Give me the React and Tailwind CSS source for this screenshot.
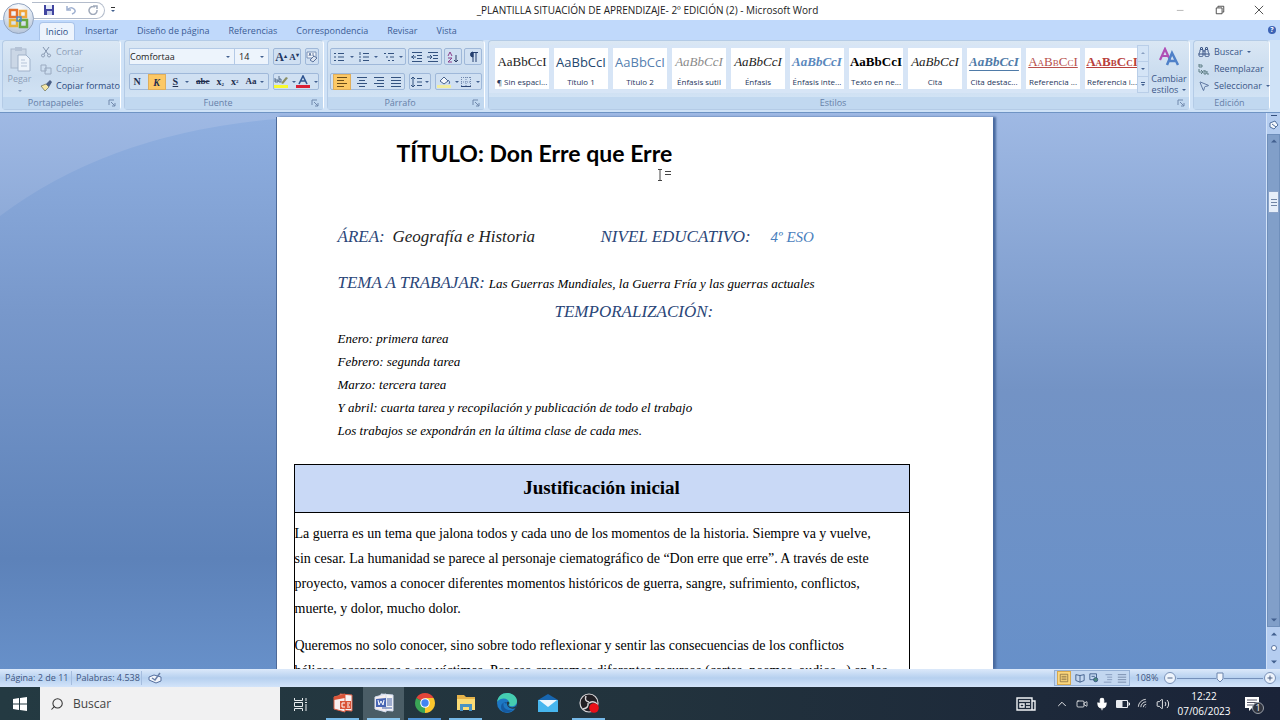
import {
  ChevronUp,
  Video,
  Mic,
  Wifi,
  Volume2,
  Search,
  Binoculars,
  MousePointer2,
} from 'lucide-react';

const tabs = ['Insertar', 'Diseño de página', 'Referencias', 'Correspondencia', 'Revisar', 'Vista'];

const styles = [
  { name: '¶ Sin espaci...', look: 'text-[#222] text-[13px]' },
  { name: 'Título 1', look: 'font-[Open_Sans] text-[#24476f] text-[13px] font-medium' },
  { name: 'Título 2', look: 'font-[Open_Sans] text-[#5580b0] text-[13px] font-medium' },
  { name: 'Énfasis sutil', look: 'italic text-[#8a8a8a] text-[13px]' },
  { name: 'Énfasis', look: 'italic text-[#222] text-[13px]' },
  { name: 'Énfasis inte...', look: 'italic font-bold text-[#5a88bd] text-[13px]' },
  { name: 'Texto en ne...', look: 'font-bold text-black text-[13px]' },
  { name: 'Cita', look: 'italic text-[#222] text-[13px]' },
  { name: 'Cita destac...', look: 'italic font-bold text-[#4f7ba8] text-[13px] underline underline-offset-4' },
  { name: 'Referencia ...', look: 'text-[#b8504c] text-[13px] underline [font-variant:small-caps]' },
  { name: 'Referencia i...', look: 'font-bold text-[#b8403c] text-[13px] underline [font-variant:small-caps]' },
];

const schedule = [
  'Enero: primera tarea',
  'Febrero: segunda tarea',
  'Marzo: tercera tarea',
  'Y abril: cuarta tarea y recopilación y publicación de todo el trabajo',
  'Los trabajos se expondrán en la última clase de cada mes.',
];

const firstParagraph = [
  'La guerra es un tema que jalona todos y cada uno de los momentos de la historia. Siempre va y vuelve,',
  'sin cesar. La humanidad se parece al personaje ciematográfico de “Don erre que erre”. A través de este',
  'proyecto, vamos a conocer diferentes momentos históricos de guerra, sangre, sufrimiento, conflictos,',
  'muerte, y dolor, mucho dolor.',
];

const secondParagraph = [
  'Queremos no solo conocer, sino sobre todo reflexionar y sentir las consecuencias de los conflictos',
  'bélicos, acercarnos a sus víctimas. Por eso crearemos diferentes recursos (cartas, poemas, audios...) en los',
];

function Caret({ className = '' }) {
  return (
    <svg className={`w-1 h-1 shrink-0 ${className}`} viewBox="0 0 4 4">
      <path d="M0 1h4L2 3z" fill="#42608f" />
    </svg>
  );
}

function Launcher() {
  return (
    <svg className="w-2 h-2" viewBox="0 0 8 8" fill="none" stroke="#7189ad">
      <path d="M1 6V1h5M3 3l4 4M7 4v3H4" />
    </svg>
  );
}

function Group({ label, launcher, className = '', children }) {
  return (
    <section className={`flex flex-col rounded-sm border border-[#b4cbe6] border-r-white bg-linear-to-b from-[#dae7f4] via-[#cadcef] to-[#d5e6f7] ${className}`}>
      <div className="flex-1 min-h-0">{children}</div>
      <div className="flex items-center h-3 bg-[#c1d8f0] text-[#6680a8] text-[9px] leading-3 pr-1">
        <span className="flex-1 text-center">{label}</span>
        {launcher && <button aria-label={`Opciones de ${label}`}><Launcher /></button>}
      </div>
    </section>
  );
}

function Bar({ className = '', children }) {
  return (
    <div className={`flex items-center justify-around h-[17px] rounded-xs border border-[#9fb8d9] bg-[#d0e0f2] ${className}`}>
      {children}
    </div>
  );
}

function Lines({ d, color = '#33527f', size = 'w-3 h-3', className = '', children }) {
  return (
    <svg className={`${size} ${className}`} viewBox="0 0 12 12" fill="none" stroke={color}>
      <path d={d} />
      {children}
    </svg>
  );
}

function Clipboard() {
  return (
    <Group label="Portapapeles" launcher className="w-[119px]">
      <div className="flex h-full text-[#8e9fb8]">
        <button className="flex flex-col items-center w-9 pt-1">
          <svg className="w-6 h-7" viewBox="0 0 24 28">
            <rect x="3" y="4" width="15" height="19" fill="#cbd7e6" stroke="#a9b8cc" />
            <path d="M7 2h7v4H7z" fill="#b5c3d6" />
            <path d="M10 10h8l4 4v12H10z" fill="#eef4fb" stroke="#9fb1c9" />
            <path d="M13 15h4M13 18h6M13 21h6" stroke="#b7c5d9" />
          </svg>
          <span className="leading-3">Pegar</span>
          <Caret className="mt-1 opacity-50" />
        </button>
        <div className="flex flex-col pt-0.5 pl-1">
          <button className="flex items-center gap-1 h-[17px]">
            <Lines d="M3 1l5 7M9 1L4 8M3 8a1.5 1.5 0 1 0 .1 0M9 8a1.5 1.5 0 1 0 .1 0" color="#8394ad" />
            Cortar
          </button>
          <button className="flex items-center gap-1 h-[17px]">
            <Lines d="M1 2h5v6H1zM5 5h6v6H5z" color="#9aaac0" />
            Copiar
          </button>
          <button className="flex items-center gap-1 h-[17px] text-[#2c4b80]">
            <svg className="w-3 h-3" viewBox="0 0 12 12">
              <path d="M1 6l4 5 4-4-3-3z" fill="#f5e7a6" stroke="#6b6f52" strokeWidth=".7" />
              <path d="M6 4l4-4 2 2-3 5z" fill="#4a5f86" />
            </svg>
            Copiar formato
          </button>
        </div>
      </div>
    </Group>
  );
}

function FontGroup() {
  return (
    <Group label="Fuente" launcher className="w-[200px]">
      <div className="flex flex-col gap-2 pt-[7px] px-1">
        <div className="flex gap-1">
          <div className="flex h-[17px] bg-[#edf4fc] border border-[#b4cae6] text-[#222]">
            <div className="flex items-center w-[104px] pr-1">
              <input aria-label="Fuente" defaultValue="Comfortaa" className="w-full min-w-0 outline-none" />
              <Caret />
            </div>
            <div className="flex items-center w-[34px] pl-1 pr-1 border-l border-[#b4cae6]">
              <input aria-label="Tamaño" defaultValue="14" className="w-full min-w-0 outline-none" />
              <Caret />
            </div>
          </div>
          <Bar className="w-8 font-[Liberation_Serif] font-bold text-[#1f3763]">
            <button className="text-[12px] leading-3">A<sup className="text-[6px]">▴</sup></button>
            <button className="text-[9px] leading-3">A<sup className="text-[6px]">▾</sup></button>
          </Bar>
          <Bar className="w-4">
            <button aria-label="Borrar formato">
              <svg className="w-3 h-3" viewBox="0 0 12 12">
                <path d="M1 1h9v6H1z" fill="#f2f6fb" stroke="#7890b5" />
                <path d="M3 5l1-3 1 3M7 2v3h1" fill="none" stroke="#45618f" strokeWidth=".8" />
                <path d="M4 9l4-4 3 2-4 4z" fill="#dbe3f0" stroke="#5c739c" />
              </svg>
            </button>
          </Bar>
        </div>
        <div className="flex gap-1">
          <Bar className="w-[141px] font-[Liberation_Serif] font-bold text-[#1f2f50] text-[10px]">
            <button>N</button>
            <button className="w-[18px] h-4 bg-[#fcc865] border border-[#dfae5c] italic">K</button>
            <button className="underline">S</button>
            <Caret />
            <button className="line-through text-[9px]">abc</button>
            <button>x<sub className="text-[5px]">2</sub></button>
            <button>x<sup className="text-[5px]">2</sup></button>
            <button className="flex items-center gap-1 text-[9px]">Aa<Caret /></button>
          </Bar>
          <Bar className="flex-1">
            <button aria-label="Resaltado" className="flex items-center gap-1">
              <svg className="w-[14px] h-3.5" viewBox="0 0 14 14">
                <path d="M1 3v4h3V5H1M5 1v6h2V4H5" fill="none" stroke="#49627f" strokeWidth=".9" />
                <path d="M7 8l5-6 2 1-5 6z" fill="#8b8f65" />
                <path d="M0 10h14v3H0z" fill="#f8fa2e" />
              </svg>
              <Caret />
            </button>
            <button aria-label="Color de fuente" className="flex items-center gap-1">
              <svg className="w-[14px] h-3.5" viewBox="0 0 14 14">
                <path d="M3 9l4-8 4 8M5 6h4" fill="none" stroke="#2f5490" strokeWidth="1.6" />
                <path d="M0 10h14v3H0z" fill="#da1f35" />
              </svg>
              <Caret />
            </button>
          </Bar>
        </div>
      </div>
    </Group>
  );
}

function Paragraph() {
  return (
    <Group label="Párrafo" launcher className="w-[158px]">
      <div className="flex flex-col gap-2 pt-[7px] px-0.5">
        <div className="flex gap-0.5">
          <Bar className="w-[77px]">
            <button aria-label="Viñetas"><Lines d="M1 2.5h2M1 6h2M1 9.5h2M5 2.5h6M5 6h6M5 9.5h6" /></button>
            <Caret />
            <button aria-label="Numeración"><Lines d="M2 1v3M1 6h2M2 8v3M5 2.5h6M5 6h6M5 9.5h6" /></button>
            <Caret />
            <button aria-label="Lista multinivel"><Lines d="M1 2.5h2M3 6h2M5 9.5h2M5 2.5h6M7 6h4M9 9.5h2" /></button>
            <Caret />
          </Bar>
          <Bar className="w-[34px]">
            <button aria-label="Reducir sangría"><Lines d="M1 1.5h10M6 4.5h5M6 7.5h5M1 10.5h10M5 6H0M3 4L1 6l2 2" /></button>
            <button aria-label="Aumentar sangría"><Lines d="M1 1.5h10M6 4.5h5M6 7.5h5M1 10.5h10M0 6h5M3 4l2 2-2 2" /></button>
          </Bar>
          <Bar className="w-[18px]">
            <button aria-label="Ordenar">
              <Lines d="M1 5l2-4 2 4M1 7h4l-4 4h4" color="#8c3f8a"><path d="M9 4v7M7 9l2 2 2-2" stroke="#2d3f66" /></Lines>
            </button>
          </Bar>
          <Bar className="w-[18px]">
            <button aria-label="Mostrar todo">
              <Lines d="M6 1v10M9 1v10M5 1.500h6" color="#243f6e"><path d="M6 1a2.500 2.500 0 0 0 0 5z" fill="#243f6e" /></Lines>
            </button>
          </Bar>
        </div>
        <div className="flex gap-1">
          <Bar className="w-[75px]">
            <button aria-label="Alinear a la izquierda" className="w-[18px] h-4 flex items-center justify-center bg-[#fcc865] border border-[#dfae5c]">
              <Lines d="M1 1.5h10M1 4.5h7M1 7.5h10M1 10.5h7" color="#6b4c18" />
            </button>
            <button aria-label="Centrar"><Lines d="M1 1.5h10M3 4.5h6M1 7.5h10M3 10.5h6" /></button>
            <button aria-label="Alinear a la derecha"><Lines d="M1 1.5h10M4 4.5h7M1 7.5h10M4 10.5h7" /></button>
            <button aria-label="Justificar"><Lines d="M1 1.5h10M1 4.5h10M1 7.5h10M1 10.5h10" /></button>
          </Bar>
          <Bar className="w-[22px]">
            <button aria-label="Interlineado" className="flex items-center gap-0.5">
              <Lines d="M2 1v10M0 3l2-2 2 2M0 9l2 2 2-2M6 2.5h5M6 6h5M6 9.5h5" /><Caret />
            </button>
          </Bar>
          <Bar className="flex-1">
            <button aria-label="Sombreado" className="flex items-center gap-1">
              <svg className="w-3.5 h-3.5" viewBox="0 0 14 14">
                <path d="M3 6l4-4 4 4-4 3z" fill="#f3f7fc" stroke="#4b658f" />
                <path d="M11 5q3 2 1 4" fill="none" stroke="#49699c" />
                <path d="M0 10h14v3H0z" fill="#f1eda0" />
              </svg>
              <Caret />
            </button>
            <button aria-label="Bordes" className="flex items-center gap-1">
              <svg className="w-3 h-3" viewBox="0 0 12 12" fill="none" stroke="#7088ae">
                <path d="M1.500 1v9M6 1v9M10.500 1v9M1 1.500h10M1 6h10" strokeDasharray="1 1" />
                <path d="M1 10.500h10" stroke="#2f4876" />
              </svg>
              <Caret />
            </button>
          </Bar>
        </div>
      </div>
    </Group>
  );
}

function Styles() {
  return (
    <Group label="Estilos" launcher className="flex-1 min-w-0">
      <div className="flex h-full">
        <div className="flex flex-1 min-w-0 items-start gap-[5px] mt-1 h-12 px-1.5 py-[3px] bg-[#d7e5f6]">
          {styles.map((s) => (
            <button key={s.name} className="flex flex-col items-center justify-between shrink-0 w-[54px] h-[41px] pt-1.5 bg-white text-[#25365c]">
              <span className={`font-[Liberation_Serif] leading-4 whitespace-nowrap ${s.look}`}>AaBbCcI</span>
              <span className="text-[8px] leading-[14px] whitespace-nowrap">{s.name}</span>
            </button>
          ))}
        </div>
        <div className="flex flex-col w-3 h-12 mt-1 shrink-0 border border-[#b9cee8] divide-y divide-[#b9cee8] bg-[#d4e4f6]">
          <button aria-label="Fila anterior" className="flex-1 flex items-center justify-center"><Caret className="rotate-180 opacity-50" /></button>
          <button aria-label="Fila siguiente" className="flex-1 flex items-center justify-center"><Caret /></button>
          <button aria-label="Más" className="flex-1 flex flex-col items-center justify-center"><span className="w-1 h-px bg-[#42608f]" /><Caret /></button>
        </div>
        <button className="flex flex-col items-center w-10 shrink-0 pt-1.5 text-[#3c5788] leading-[11px]">
          <svg className="w-5 h-5 mb-1.5" viewBox="0 0 20 20" fill="none">
            <path d="M1 13L6 2l5 11M3 9h6" stroke="#b04fb5" strokeWidth="2.200" />
            <path d="M8 18l5-12 6 12M10 14h6" stroke="#4f80c8" strokeWidth="2.500" />
          </svg>
          <span>Cambiar</span>
          <span className="flex items-center gap-1">estilos <Caret /></span>
        </button>
      </div>
    </Group>
  );
}

function Editing() {
  return (
    <Group label="Edición" className="w-[77px]">
      <div className="flex flex-col pt-0.5 pl-1 text-[#3c5788]">
        <button className="flex items-center gap-1 h-[17px]"><Binoculars className="w-3 h-3" />Buscar <Caret /></button>
        <button className="flex items-center gap-1 h-[17px]">
          <Lines d="M1 1v3h3V2H1M6 7v4h2V8H6M9 8v3h2M1 6v3h3M3 7l2 2-2 2" color="#5f7f86" />
          Reemplazar
        </button>
        <button className="flex items-center gap-1 h-[17px]"><MousePointer2 className="w-3 h-3 shrink-0" strokeWidth={1.5} />Seleccionar <Caret /></button>
      </div>
    </Group>
  );
}

function Header() {
  return (
    <header className="relative shrink-0">
      <div className="flex items-center h-5 bg-white">
        <div className="flex items-center gap-3 h-[17px] ml-8 pl-3 w-[73px] rounded-r-full border border-l-0 border-[#b3bccb]">
          <button aria-label="Guardar">
            <svg className="w-[10px] h-[10px]" viewBox="0 0 10 10">
              <path d="M0 0h10v10H0z" fill="#4145a0" />
              <path d="M2 0h6v4H2z" fill="#e5ebf8" />
              <path d="M3 6h5v4H3z" fill="#c4cce8" />
            </svg>
          </button>
          <button aria-label="Deshacer">
            <svg className="w-[10px] h-[10px]" viewBox="0 0 10 10" fill="none" stroke="#9fb0d0" strokeWidth="1.500">
              <path d="M1 1v4h4M1 5q4-4 7-1t-2 5" />
            </svg>
          </button>
          <button aria-label="Rehacer">
            <svg className="w-[10px] h-[10px]" viewBox="0 0 10 10" fill="none" stroke="#9fa9ba" strokeWidth="1.500">
              <path d="M7 2a4 4 0 1 0 2 3M5 1h4v3" />
            </svg>
          </button>
        </div>
        <button aria-label="Personalizar" className="flex flex-col items-center ml-0.5 gap-px w-3"><span className="w-1 h-px bg-[#333]" /><Caret /></button>
        <h1 className="flex-1 text-center text-[10px] leading-5 text-[#222]">_PLANTILLA SITUACIÓN DE APRENDIZAJE- 2º EDICIÓN (2) - Microsoft Word</h1>
        <div className="flex items-center gap-[29px] pr-4 text-[#333]">
          <button aria-label="Minimizar"><Lines d="M1 6.500h8" color="#aaa" size="w-2.5 h-2.5" /></button>
          <button aria-label="Restaurar"><Lines d="M1.500 3.500h7v7h-7zM3.500 3V1.500h7v7H9" color="#333" size="w-2.5 h-2.5" /></button>
          <button aria-label="Cerrar"><Lines d="M1 1l10 10M11 1L1 11" color="#333" size="w-2.5 h-2.5" /></button>
        </div>
      </div>
      <nav className="flex items-end h-5 pl-[39px] pr-1 bg-[#c0d9fb] text-[#3b5c95]">
        <button className="w-9 h-[18px] rounded-t-sm border border-b-0 border-[#a9c4ea] bg-[#edf4fd] text-[#2c4d85]">Inicio</button>
        <div className="flex flex-1 items-center gap-[19px] h-[18px] pl-2.5">
          {tabs.map((t) => <button key={t}>{t}</button>)}
        </div>
        <button aria-label="Ayuda" className="flex items-center justify-center mb-1.5 w-2 h-2 rounded-full bg-[#3b62b5] text-white text-[7px] font-bold">?</button>
      </nav>
      <button aria-label="Botón de Office" className="absolute left-[3px] top-[3px]">
        <svg className="w-[31px] h-[31px]" viewBox="0 0 31 31">
          <defs>
            <radialGradient id="orb" cx=".5" cy=".2" r=".9">
              <stop offset="0" stopColor="#fff" />
              <stop offset=".5" stopColor="#dce4ef" />
              <stop offset="1" stopColor="#a9bad3" />
            </radialGradient>
          </defs>
          <circle cx="15.500" cy="15.500" r="15" fill="url(#orb)" stroke="#93a5c0" />
          <g fill="none" strokeWidth="2.500">
            <path d="M7 7h7v7H7z" stroke="#e4702d" />
            <path d="M17 8h6v6h-6z" stroke="#f0a63c" />
            <path d="M7 17h7v6H7z" stroke="#e8b23a" />
            <path d="M17 17h7v7h-7z" stroke="#67a844" />
            <path d="M14 14h4v4h-4z" stroke="#4a86cb" strokeWidth="1.500" />
          </g>
        </svg>
      </button>
    </header>
  );
}

function Page() {
  return (
    <article className="w-[717px] min-h-full shrink-0 bg-white border-l border-[#4d6a99] shadow-[3px_0_2px_#4a6ba0] font-[Liberation_Serif] text-black whitespace-nowrap">
      <div className="pl-[61px] italic text-[13px] leading-[23px]">
        <h2 className="pl-[59px] pt-5 font-[Lato] not-italic font-bold text-[23px] leading-8">TÍTULO: Don Erre que Erre</h2>
        <div className="flex items-start pl-[318px] h-14">
          <svg className="w-4 h-3" viewBox="0 0 16 12" fill="none" stroke="#444">
            <path d="M2 .5h4M2 11.500h4M4 1v10M9 2.500h6M9 5.500h6" />
          </svg>
        </div>
        <div className="flex items-baseline text-[17px] text-[#2a4678]">
          <span className="w-[55px]">ÁREA:</span>
          <span className="w-52 text-[#222]">Geografía e Historia</span>
          <span className="w-[170px]">NIVEL EDUCATIVO:</span>
          <span className="text-[15px] text-[#4a80bd]">4º ESO</span>
        </div>
        <p className="flex items-baseline gap-1 mt-[22px]">
          <span className="text-[17px] text-[#2a4678]">TEMA A TRABAJAR:</span>
          Las Guerras Mundiales, la Guerra Fría y las guerras actuales
        </p>
        <p className="pl-[217px] mt-[5px] mb-1 text-[17px] text-[#2a4678]">TEMPORALIZACIÓN:</p>
        {schedule.map((line) => <p key={line}>{line}</p>)}
      </div>
      <table className="mt-[22px] ml-[17px] w-[616px] border-collapse text-left">
        <thead>
          <tr>
            <th className="h-12 p-0 border border-black bg-[#c9d9f6] text-center text-[19px] font-bold">Justificación inicial</th>
          </tr>
        </thead>
        <tbody>
          <tr>
            <td className="p-0 pt-2 border border-black text-[14px] leading-[25px]">
              {firstParagraph.map((line) => <p key={line}>{line}</p>)}
              <div className="mt-3">
                {secondParagraph.map((line) => <p key={line}>{line}</p>)}
              </div>
            </td>
          </tr>
        </tbody>
      </table>
    </article>
  );
}

function Scrollbar() {
  return (
    <aside className="flex flex-col items-center w-3.5 shrink-0 bg-[#b5cdf0] border-l border-[#d2e2f8]">
      <span className="w-1.5 h-px mt-0.5 bg-[#35507d]" />
      <svg className="w-2.5 h-2.5 my-1" viewBox="0 0 10 10" fill="#f3f7fc" stroke="#53709e">
        <path d="M1 3l5-2 3 4-4 4-4-2z" />
        <path d="M3 4l4 3" />
      </svg>
      <div className="flex flex-1 flex-col items-center w-full bg-[#819fc9] border border-[#6f8fbb]">
        <Caret className="my-1 scale-150 rotate-180" />
        <div className="flex flex-col items-center justify-center gap-0.5 mt-11 w-full h-[22px] bg-[#e6eef9] border border-[#8ba3c8]">
          <span className="w-1.5 h-px bg-[#7185a5]" />
          <span className="w-1.5 h-px bg-[#7185a5]" />
          <span className="w-1.5 h-px bg-[#7185a5]" />
        </div>
        <Caret className="mt-auto mb-1 scale-150" />
      </div>
      <div className="flex flex-col items-center justify-around h-[42px]">
        <Caret className="scale-150 rotate-180" />
        <span className="w-1.5 h-1.5 rounded-full border border-[#5a75a3] bg-white" />
        <Caret className="scale-150" />
      </div>
    </aside>
  );
}

function StatusBar() {
  return (
    <footer className="flex items-center h-[18px] shrink-0 bg-linear-to-b from-[#dce9fa] via-[#b6d0ef] to-[#d3e4fa] text-[#3d557f] text-[9px]">
      <span className="w-[72px] pl-[5px] border-r border-[#a5bddf]">Página: 2 de 11</span>
      <span className="w-[70px] pl-1 border-r border-[#a5bddf]">Palabras: 4.538</span>
      <svg className="w-3.5 h-3 ml-1.5" viewBox="0 0 14 12">
        <path d="M1 5l5-2 7 2v4l-5 2-7-3z" fill="#f2f5fb" stroke="#56709f" />
        <path d="M4 6l3 2 5-7" fill="none" stroke="#6a80a8" strokeWidth="1.500" />
      </svg>
      <div className="flex items-center justify-around ml-auto w-[76px] h-4 border border-[#95b0d5] bg-[#c3d7f0]">
        <button aria-label="Diseño de impresión" className="flex items-center justify-center w-3.5 h-3.5 bg-[#fbd77d] border border-[#d7a94f]">
          <Lines d="M1.500 1.500h9v9h-9zM3 4h6M3 6h6M3 8h6" color="#8a7245" size="w-2.5 h-2.5" />
        </button>
        <button aria-label="Lectura"><Lines d="M6 3v8M1 2l5 1 5-1v7l-5 2-5-2z" size="w-2.5 h-2.5" /></button>
        <button aria-label="Diseño web"><Lines d="M1 1h8v7H1zM3 4h4" size="w-2.5 h-2.5"><circle cx="8" cy="8" r="2.500" fill="#4c8b7b" /></Lines></button>
        <button aria-label="Esquema"><Lines d="M3 2h8M5 5h6M5 8h6M1 11h9" color="#7d92b5" size="w-2.5 h-2.5" /></button>
        <button aria-label="Borrador"><Lines d="M1 2h10M1 5h10M1 8h10M1 11h10" color="#6b7f9f" size="w-2.5 h-2.5" /></button>
      </div>
      <span className="w-[34px] text-center">108%</span>
      <button aria-label="Alejar" className="shrink-0">
        <Lines d="M3 6h6" color="#33486f" className="rounded-full bg-[#eef4fc] border border-[#7a92b8]" />
      </button>
      <div className="flex items-center justify-center w-[86px] mx-px">
        <span className="flex-1 h-px bg-[#7590ba]" />
        <svg className="w-2 h-3" viewBox="0 0 8 12"><path d="M1 1h6v6L4 10 1 7z" fill="#f2f6fc" stroke="#6a83ac" /></svg>
        <span className="flex-1 h-px bg-[#7590ba]" />
      </div>
      <button aria-label="Acercar" className="mr-1 shrink-0">
        <Lines d="M3 6h6M6 3v6" color="#33486f" className="rounded-full bg-[#eef4fc] border border-[#7a92b8]" />
      </button>
    </footer>
  );
}

function OfficeIcon({ color, children }) {
  return (
    <svg className="w-5 h-5" viewBox="0 0 20 20">
      <path d="M7 1l12 1v16L7 17z" fill="#f6f4f5" stroke={color} />
      <path d="M1 4l11-3v18L1 16z" fill="#f7eeee" stroke={color} />
      {children}
    </svg>
  );
}

const apps = [
  {
    name: 'PowerPoint',
    frame: 'border-[#76b9e8]',
    icon: (
      <OfficeIcon color="#dc6047">
        <path d="M1 4l11-3v4L1 7zM7 8h11v8H7z" fill="#d95438" />
        <path d="M12 10H9v4h3M14 10h3M14 12h2M14 14h3" stroke="#fff" fill="none" />
      </OfficeIcon>
    ),
  },
  {
    name: 'Word',
    frame: 'border-[#8ac6ee] bg-[#4a5d66]',
    icon: (
      <OfficeIcon color="#d5def0">
        <path d="M2 6l10-1v9L2 14z" fill="#4865b4" />
        <path d="M4 7l1 5 2-4 2 4 1-5" stroke="#fff" fill="none" />
        <path d="M13 6h5M13 8h5M13 10h5M8 15h10M13 12h5" stroke="#4562a8" />
      </OfficeIcon>
    ),
  },
  {
    name: 'Chrome',
    frame: 'border-[#4f93d6]',
    icon: (
      <svg className="w-5 h-5" viewBox="0 0 20 20">
        <path d="M10 10L1.340 5A10 10 0 0 1 18.660 5z" fill="#e2453a" />
        <path d="M10 10L18.660 5A10 10 0 0 1 10 20z" fill="#fbc62d" />
        <path d="M10 10V20A10 10 0 0 1 1.340 5z" fill="#3aa556" />
        <path d="M10 5h8.660L14 12z" fill="#fbc62d" />
        <circle cx="10" cy="10" r="4.800" fill="#fff" />
        <circle cx="10" cy="10" r="3.700" fill="#4384f0" />
      </svg>
    ),
  },
  {
    name: 'Explorador de archivos',
    frame: 'border-[#76b9e8]',
    icon: (
      <svg className="w-5 h-5" viewBox="0 0 20 20">
        <path d="M1 2h7l2 2h9v13H1z" fill="#e6b34a" />
        <path d="M1 6h18v11H1z" fill="#fbdc76" />
        <path d="M4 11h12v7h-3v-4H7v4H4z" fill="#4a93c4" />
      </svg>
    ),
  },
  {
    name: 'Edge',
    frame: 'border-transparent',
    icon: (
      <svg className="w-5 h-5" viewBox="0 0 20 20">
        <circle cx="10" cy="10" r="10" fill="#1d78c4" />
        <path d="M0 9C1 3 5 0 10 0c6 0 10 4 10 8 0 4-3 6-7 5-2-1 0-2-1-4C11 5 4 4 0 9z" fill="#45cdb0" />
        <path d="M7 9c-2 4 1 9 9 8-5 4-12 3-12-3 0-3 2-5 6-5l-1 2z" fill="#155aa0" />
        <path d="M10 9c2-1 3 1 2 2s-1 2 1 3c3 1 5 0 7-2l-1 3c-5 2-10-1-9-6z" fill="#243a45" />
      </svg>
    ),
  },
  {
    name: 'Correo',
    frame: 'border-transparent',
    icon: (
      <svg className="w-5 h-5" viewBox="0 0 20 20">
        <path d="M0 7l10-6 10 6v3H0z" fill="#1766b0" />
        <path d="M0 7h20v12H0z" fill="#47b6ee" />
        <path d="M1 7h18l-9 7z" fill="#eef7fd" />
      </svg>
    ),
  },
  {
    name: 'OBS Studio',
    frame: 'border-[#76b9e8]',
    icon: (
      <svg className="w-5 h-5" viewBox="0 0 20 20">
        <circle cx="10" cy="10" r="9" fill="#221f24" stroke="#d8d5d8" strokeWidth="1.200" />
        <path d="M10 9Q5 8 7 3M10 10q5-3 8 1M9 10q1 5-5 6" fill="none" stroke="#d8d5d8" strokeWidth="1.500" />
        <circle cx="15" cy="15" r="4.800" fill="#e81018" />
      </svg>
    ),
  },
];

function Taskbar() {
  return (
    <div className="flex h-[33px] shrink-0 bg-linear-to-r from-[#243a42] via-[#22333d] to-[#1a2338] text-white">
      <button aria-label="Inicio" className="flex items-center justify-center w-10">
        <svg className="w-3.5 h-3.5" viewBox="0 0 14 14" fill="#fff">
          <path d="M0 2l6-1v5.500H0zM7 1l7-1v6.500H7zM0 7.500h6V13l-6-1zM7 7.500h7V14l-7-1z" />
        </svg>
      </button>
      <label className="flex items-center gap-[9px] w-60 pl-2.5 bg-[#f1f1f2] text-[#333] text-[12px]">
        <Search className="w-3.5 h-3.5 -scale-x-100" strokeWidth={1.8} />
        <input aria-label="Buscar" placeholder="Buscar" className="w-32 outline-none placeholder:text-[#444]" />
      </label>
      <button aria-label="Vista de tareas" className="flex items-center justify-center w-[42px]">
        <svg className="w-3.5 h-3.5" viewBox="0 0 14 14" fill="none" stroke="#e8ecee">
          <path d="M.5 1v2.500h8V1M.5 5.500h8v4h-8zM.5 14v-2.500h8V14M12 1v3M12 7v7M11 5.500h2" />
        </svg>
      </button>
      <div className="flex">
        {apps.map((app) => (
          <div key={app.name} className={`w-[41px] flex ${app.name === 'Word' ? 'bg-[#4a5d66]' : ''}`}>
            <button aria-label={app.name} className={`flex flex-1 items-center justify-center mx-1 border-b-2 ${app.frame}`}>{app.icon}</button>
          </div>
        ))}
      </div>
      <div className="flex flex-1 items-center justify-end gap-[7px]">
        <svg className="w-5 h-3.5 mr-3" viewBox="0 0 20 14" fill="none" stroke="#f0f2f5" strokeWidth="1.400">
          <path d="M1 1h15v12H1zM16 4h3v9h-3M3 4h11M4 7h4v3H4zM10 7h4M10 10h4" />
        </svg>
        <ChevronUp className="w-3.5 h-3.5" strokeWidth={1.5} />
        <Video className="w-3 h-3" strokeWidth={1.5} />
        <Mic className="w-3.5 h-3.5" fill="#fff" strokeWidth={1.8} />
        <svg className="w-3.5 h-2" viewBox="0 0 14 8" fill="none" stroke="#e8ebf0"><path d="M.5.5h11v7H.5zM12 3h1.500v2H12" /><path d="M1 1h5v6H1z" fill="#e8ebf0" /></svg>
        <Wifi className="w-3 h-3 -rotate-45" strokeWidth={1.5} />
        <Volume2 className="w-3.5 h-3.5" strokeWidth={1.5} />
        <div className="w-[54px] text-center text-[10px] leading-[15px] whitespace-nowrap">
          <p>12:22</p>
          <p>07/06/2023</p>
        </div>
        <button aria-label="Notificaciones" className="relative ml-1.5 mr-5">
          <svg className="w-4 h-4" viewBox="0 0 16 16"><path d="M1 1h14v11H8l-3 3v-3H1z" fill="#fff" /><path d="M3 4h10M3 6.500h10M3 9h6" stroke="#556" /></svg>
          <span className="absolute left-2 top-1.5 flex items-center justify-center w-3 h-3 rounded-full border border-[#9aa0aa] bg-[#30343f] text-[9px]">1</span>
        </button>
      </div>
    </div>
  );
}

export default function App() {
  return (
    <div className="flex flex-col h-screen overflow-hidden font-[Open_Sans,sans-serif] text-[9px] whitespace-nowrap">
      <Header />
      <div className="flex gap-[3px] h-[73px] shrink-0 px-0.5 pr-2.5 pb-0.5 bg-[#cfe2f7] border-b border-[#6f94c4]">
        <Clipboard />
        <FontGroup />
        <Paragraph />
        <Styles />
        <Editing />
      </div>
      <main className="flex flex-1 min-h-0">
        <div className="relative flex flex-1 justify-center min-w-0 pt-1 pl-0.5 overflow-hidden bg-linear-to-b from-[#9fb9e4] via-[#7393c5] to-[#6790c9]">
          <svg className="absolute left-0 top-0 w-[276px] h-full" viewBox="0 0 276 556" preserveAspectRatio="none">
            <defs>
              <linearGradient id="swoosh" x1="0" y1="0" x2="0" y2="1">
                <stop offset="0" stopColor="#8fafe0" />
                <stop offset=".35" stopColor="#7898cb" />
                <stop offset=".8" stopColor="#5d82b9" />
                <stop offset="1" stopColor="#6790c9" />
              </linearGradient>
            </defs>
            <path d="M0 103Q110 20 276 6V556H0z" fill="url(#swoosh)" />
          </svg>
          <Page />
        </div>
        <Scrollbar />
      </main>
      <StatusBar />
      <Taskbar />
    </div>
  );
}
